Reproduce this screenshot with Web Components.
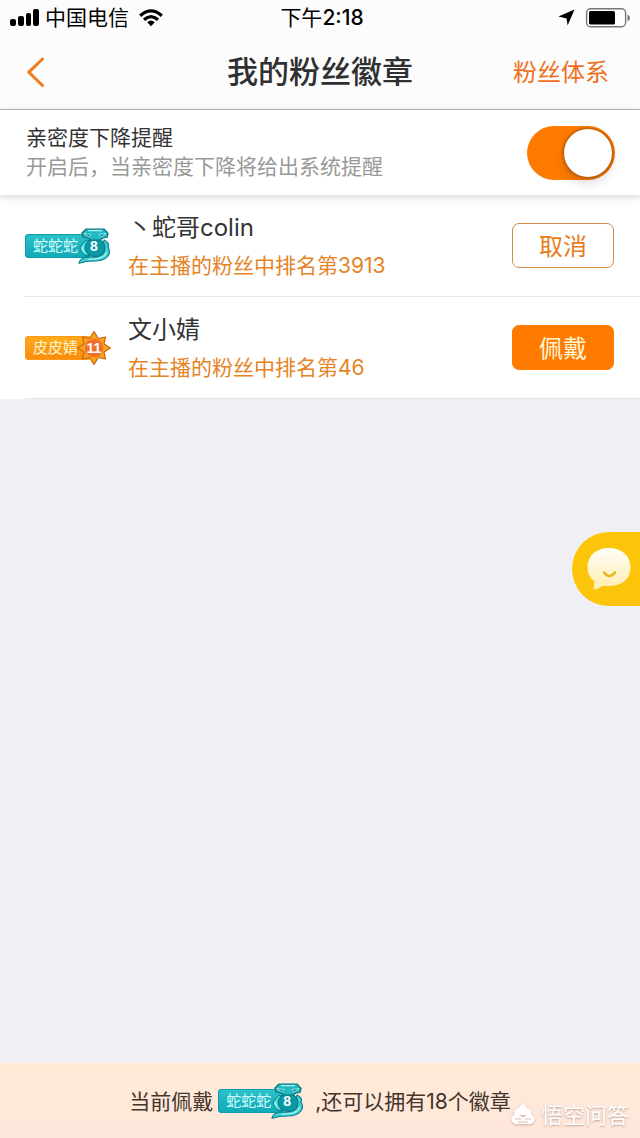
<!DOCTYPE html>
<html lang="zh-CN">
<head>
<meta charset="utf-8">
<meta name="viewport" content="width=device-width, initial-scale=1">
<title>我的粉丝徽章</title>
<style>
  html, body { margin: 0; min-height: 100%; }
  body { background: #f0eff4; font-family: Inter, "Noto Sans CJK SC", sans-serif; color: #333; }
</style>
</head>
<body>
<fan-app></fan-app>

<template id="t-status-bar">
  <style>
    :host { display: grid; grid-template-columns: 1fr auto 1fr; align-items: center; height: 35px; padding: 0 10px; font-size: 21px; color: #000; line-height: 24px; }
    .left, .right { display: flex; align-items: center; }
    .left { gap: 6px; }
    .left .carrier { margin-right: 4px; }
    .right { justify-content: flex-end; gap: 10px; }
    .time { padding-left: 4px; }
    b { font-weight: 500; }
    svg { display: block; flex: none; }
  </style>
  <div class="left">
    <svg width="29" height="18" viewBox="0 0 29 18" aria-hidden="true"><rect x="0" y="10" width="6" height="7" rx="2"/><rect x="8" y="7" width="6" height="10" rx="2"/><rect x="16" y="4" width="5" height="13" rx="2"/><rect x="23" y="0" width="6" height="17" rx="2"/></svg>
    <span class="carrier">中国电信</span>
    <svg width="24" height="18" viewBox="0 0 24 18" aria-hidden="true"><g fill="none" stroke="#000" stroke-width="3.2"><path d="M1.2 6.7Q12-3 22.8 6.7"/><path d="M5 10.8Q12 4.4 19 10.8"/></g><path d="M8.2 13.2Q12 9.8 15.8 13.2L12 17.2Z"/></svg>
  </div>
  <span class="time">下午<b>2:18</b></span>
  <div class="right">
    <svg width="17" height="17" viewBox="0 0 17 17" aria-hidden="true"><path d="M16.5.5 9.6 16.5 8.6 9.4.4 7.6Z"/></svg>
    <svg width="45" height="20" viewBox="0 0 45 20" aria-hidden="true"><rect x="1.6" y=".8" width="39" height="18" rx="4" fill="#fff" stroke="#777" stroke-width="1.4"/><rect x="4" y="3" width="26" height="13.6" rx="1.5"/><path d="M42.500 6.500Q45 7.500 45 10T42.500 13.500Z" fill="#777"/></svg>
  </div>
</template>

<template id="t-nav-bar">
  <style>
    :host { display: grid; grid-template-columns: 1fr auto 1fr; align-items: center; height: 74px; padding: 0 26px; border-bottom: 1px solid #b8b8b8; }
    button { width: 20px; height: 30px; padding: 0; border: 0; background: none; }
    svg { display: block; }
    h1 { margin: 0; font-size: 31px; font-weight: 500; line-height: 40px; color: #303030; }
    a { justify-self: end; padding: 2px 5px 0 0; font-size: 24px; line-height: 32px; color: #ef7021; text-decoration: none; }
  </style>
  <button aria-label="返回"><svg width="20" height="30" viewBox="0 0 20 30"><path d="M16.5 2 2.8 15.2 16.5 28.5" fill="none" stroke="#ec7e20" stroke-width="3" stroke-linecap="round" stroke-linejoin="round"/></svg></button>
  <h1><slot></slot></h1>
  <a href="#system"><slot name="link"></slot></a>
</template>

<template id="t-remind-setting">
  <style>
    :host { display: flex; align-items: center; justify-content: space-between; height: 85px; padding: 0 25px 0 26px; background: #fff; position: relative; z-index: 1; box-shadow: 0 2px 8px rgba(0,0,0,.16); font-size: 21px; line-height: 29px; }
    label { display: flex; flex-direction: column; padding-bottom: 2px; }
    small { font-size: inherit; color: #999; }
    input { appearance: none; display: flex; align-items: center; box-sizing: border-box; width: 88px; height: 54px; margin: 0; padding: 3px; border-radius: 27px; background: #ccc; }
    input::before { content: ""; width: 48px; height: 48px; border-radius: 50%; background: #fff; box-shadow: 0 0 3px 1px rgba(110,60,0,.6), 0 6px 12px rgba(0,0,60,.14); }
    input:checked { background: #ff7b00; justify-content: flex-end; }
  </style>
  <label for="remind"><span>亲密度下降提醒</span><small>开启后，当亲密度下降将给出系统提醒</small></label>
  <input id="remind" type="checkbox" role="switch" checked>
</template>

<template id="t-fan-badge">
  <style>
    :host { display: inline-grid; grid-template-columns: 52px 34px; align-items: center; width: 86px; height: 36px; flex: none; font-size: 15px; line-height: 24px; color: #fff; }
    .name { grid-area: 1 / 1 / 2 / 3; margin-right: 20px; padding-left: 8px; height: 24px; border-radius: 4px; box-sizing: border-box; background: linear-gradient(#2dc1cb, #10a9b6); box-shadow: inset 0 0 0 1px #0d9dab; white-space: nowrap; color: #d5ffff; }
    .mark { grid-area: 1 / 2 / 2 / 3; display: grid; place-items: center; height: 36px; }
    svg { grid-area: 1 / 1; display: none; }
    .level { grid-area: 1 / 1; position: relative; font: bold 14px/20px "Liberation Sans", sans-serif; }
    :host([kind="snake"]) .snake, :host([kind="sun"]) .sun { display: block; }
    :host([kind="sun"]) .name { background: linear-gradient(#ffac1e, #fb8b0b); box-shadow: inset 0 0 0 1px #f99a18; color: #fff6cf; }
  </style>
  <span class="name"><slot></slot></span>
  <span class="mark">
    <svg class="snake" width="34" height="36" viewBox="0 0 34 36" aria-hidden="true">
      <path d="M27 12Q33 15 31 19Q34 24 31 28Q27 33 17 33Q9 33 2 35.300Q3 30 10 29Q20 30 26 26Q29 22 26 17Z" fill="#3fced4" stroke="#087f8d" stroke-width="1.2" stroke-linejoin="round"/>
      <path d="M9 12 4 18 3 20 6 26 11 28 12 14Z" fill="#55e0e0" stroke="#087f8d" stroke-width="1"/>
      <ellipse cx="18" cy="19.500" rx="10" ry="9" fill="#0898a6" stroke="#087482"/>
      <path d="M9 1H27L31 5.500 30 9.500 26 10 23 12H14L11 10 6 9 5 5Z" fill="#25b9c3" stroke="#087482" stroke-width="1.2" stroke-linejoin="round"/>
      <path d="M7 5.500 14 6.500 12 9ZM29 5.500 22 6.500 24 9Z" fill="#087482" stroke="#9ff7ee" stroke-width=".8"/>
      <path d="M11 2.600H25M6 19 5 21 7 24M11 31Q22 32 27 28L30 24" fill="none" stroke="#a4f7f0" stroke-width="1.2"/>
    </svg>
    <svg class="sun" width="34" height="36" viewBox="0 0 34 36" aria-hidden="true">
      <path d="M17 1.5 21.3 8.5 28.5 7 27 14 33.5 18 27 22 28.5 29 21.3 27.5 17 34.5 12.7 27.5 5.5 29 7 22 .5 18 7 14 5.5 7 12.7 8.5Z" fill="#f8a51c" stroke="#cf6210" stroke-width="1.2" stroke-linejoin="round"/>
      <circle cx="17" cy="18" r="9.7" fill="#ee702b" stroke="#f99a2c" stroke-width="1.2"/>
    </svg>
    <span class="level"><slot name="level"></slot></span>
  </span>
</template>

<template id="t-badge-row">
  <style>
    :host { display: block; padding-left: 25px; background: #fff; }
    .row { display: flex; align-items: center; height: 101px; padding-right: 26px; border-bottom: 1px solid #e6e6e8; }
    .info { flex: 1; padding: 2px 0 0 17px; line-height: 38px; min-width: 0; }
    .name { font-size: 24px; }
    .rank { font-size: 21px; color: #e58427; }
    button { box-sizing: border-box; width: 102px; height: 45px; padding: 2px 0 0; border: 1px solid #d58a46; border-radius: 7px; background: #fff; color: #e87c1c; font: inherit; font-size: 24px; line-height: 32px; }
    :host([primary]) button { background: #ff7b00; border-color: #ff7b00; color: #fff5d5; }
  </style>
  <div class="row">
    <slot name="badge"></slot>
    <div class="info"><div class="name"><slot name="name"></slot></div><div class="rank"><slot name="rank"></slot></div></div>
    <button><slot name="action"></slot></button>
  </div>
</template>

<template id="t-chat-bubble">
  <style>
    :host { position: fixed; right: 0; top: 532px; z-index: 2; }
    button { display: grid; place-items: center; width: 68px; height: 74px; padding: 0 0 0 6px; border: 0; border-radius: 37px 0 0 37px; background: #fdc50a; }
    svg { display: block; }
  </style>
  <button aria-label="客服"><svg width="46" height="46" viewBox="0 0 46 46">
    <defs><linearGradient id="g" x2="0" y2="1"><stop stop-color="#fffef7"/><stop offset="1" stop-color="#ffedb0"/></linearGradient></defs>
    <path d="M23 2C36 2 44.500 10 44.500 21.500S36 40 23 40Q19 40 16 40Q12 43.500 8.500 43.500Q7 43.500 8 40Q8.500 38 8.300 35.500Q1.500 30 1.500 21.500C1.500 10 10 2 23 2Z" fill="url(#g)"/>
    <path d="M18 26.500Q23.500 33.500 29 26.500" fill="none" stroke="#eab71c" stroke-width="2.600" stroke-linecap="round"/></svg></button>
</template>

<template id="t-wear-footer">
  <style>
    :host { display: flex; align-items: center; justify-content: center; position: relative; height: 75px; background: linear-gradient(#ffead6, #ffe6dc); font-size: 21px; line-height: 30px; color: #43352c; white-space: nowrap; }
    .before, .after { padding-top: 2px; }
    .before { margin-right: 5px; }
    .after { margin-left: 11px; }
    .mark { position: absolute; right: 11px; bottom: 8px; display: flex; align-items: center; gap: 5px; color: #fff; font-size: 22px; text-shadow: 0 1px 2px rgba(150,110,100,.6); }
    svg { display: block; filter: drop-shadow(0 1px 1px rgba(150,110,100,.5)); }
  </style>
  <span class="before">当前佩戴</span>
  <slot></slot>
  <span class="after">,还可以拥有18个徽章</span>
  <span class="mark"><svg width="26" height="24" viewBox="0 0 26 24" aria-hidden="true"><path d="M4 12Q4 6 9 5Q10 2 13 1Q16 2 17 5Q22 6 22 12Z" fill="#fff"/><path d="M13 15Q9 10 5 12Q0 14 2 18Q4 22 9 21H17Q22 22 24 18Q26 14 21 12Q17 10 13 15Z" fill="#fff"/><path d="M5 17Q8 14 11 17M15 17Q18 14 21 17M8 19H18" fill="none" stroke="#e9cfc5" stroke-width="1.5"/></svg>悟空问答</span>
</template>

<template id="t-fan-app">
  <style>
    :host { display: flex; flex-direction: column; min-height: 100vh; }
    header { background: #fcfcfc; }
    main { flex: 1; }
  </style>
  <header>
    <status-bar></status-bar>
    <nav-bar>我的粉丝徽章<span slot="link">粉丝体系</span></nav-bar>
  </header>
  <main>
    <remind-setting></remind-setting>
    <badge-row>
      <fan-badge slot="badge" kind="snake">蛇蛇蛇<span slot="level">8</span></fan-badge>
      <span slot="name">丶蛇哥colin</span><span slot="rank">在主播的粉丝中排名第3913</span><span slot="action">取消</span>
    </badge-row>
    <badge-row primary>
      <fan-badge slot="badge" kind="sun">皮皮婧<span slot="level">11</span></fan-badge>
      <span slot="name">文小婧</span><span slot="rank">在主播的粉丝中排名第46</span><span slot="action">佩戴</span>
    </badge-row>
  </main>
  <wear-footer><fan-badge kind="snake">蛇蛇蛇<span slot="level">8</span></fan-badge></wear-footer>
  <chat-bubble></chat-bubble>
</template>

<script>
  class TemplateElement extends HTMLElement {
    constructor() {
      super();
      const template = document.getElementById('t-' + this.localName);
      this.attachShadow({ mode: 'open' }).append(document.importNode(template.content, true));
    }
  }
  for (const name of ['status-bar', 'nav-bar', 'remind-setting', 'fan-badge', 'badge-row', 'chat-bubble', 'wear-footer', 'fan-app']) {
    customElements.define(name, class extends TemplateElement {});
  }
</script>
</body>
</html>
